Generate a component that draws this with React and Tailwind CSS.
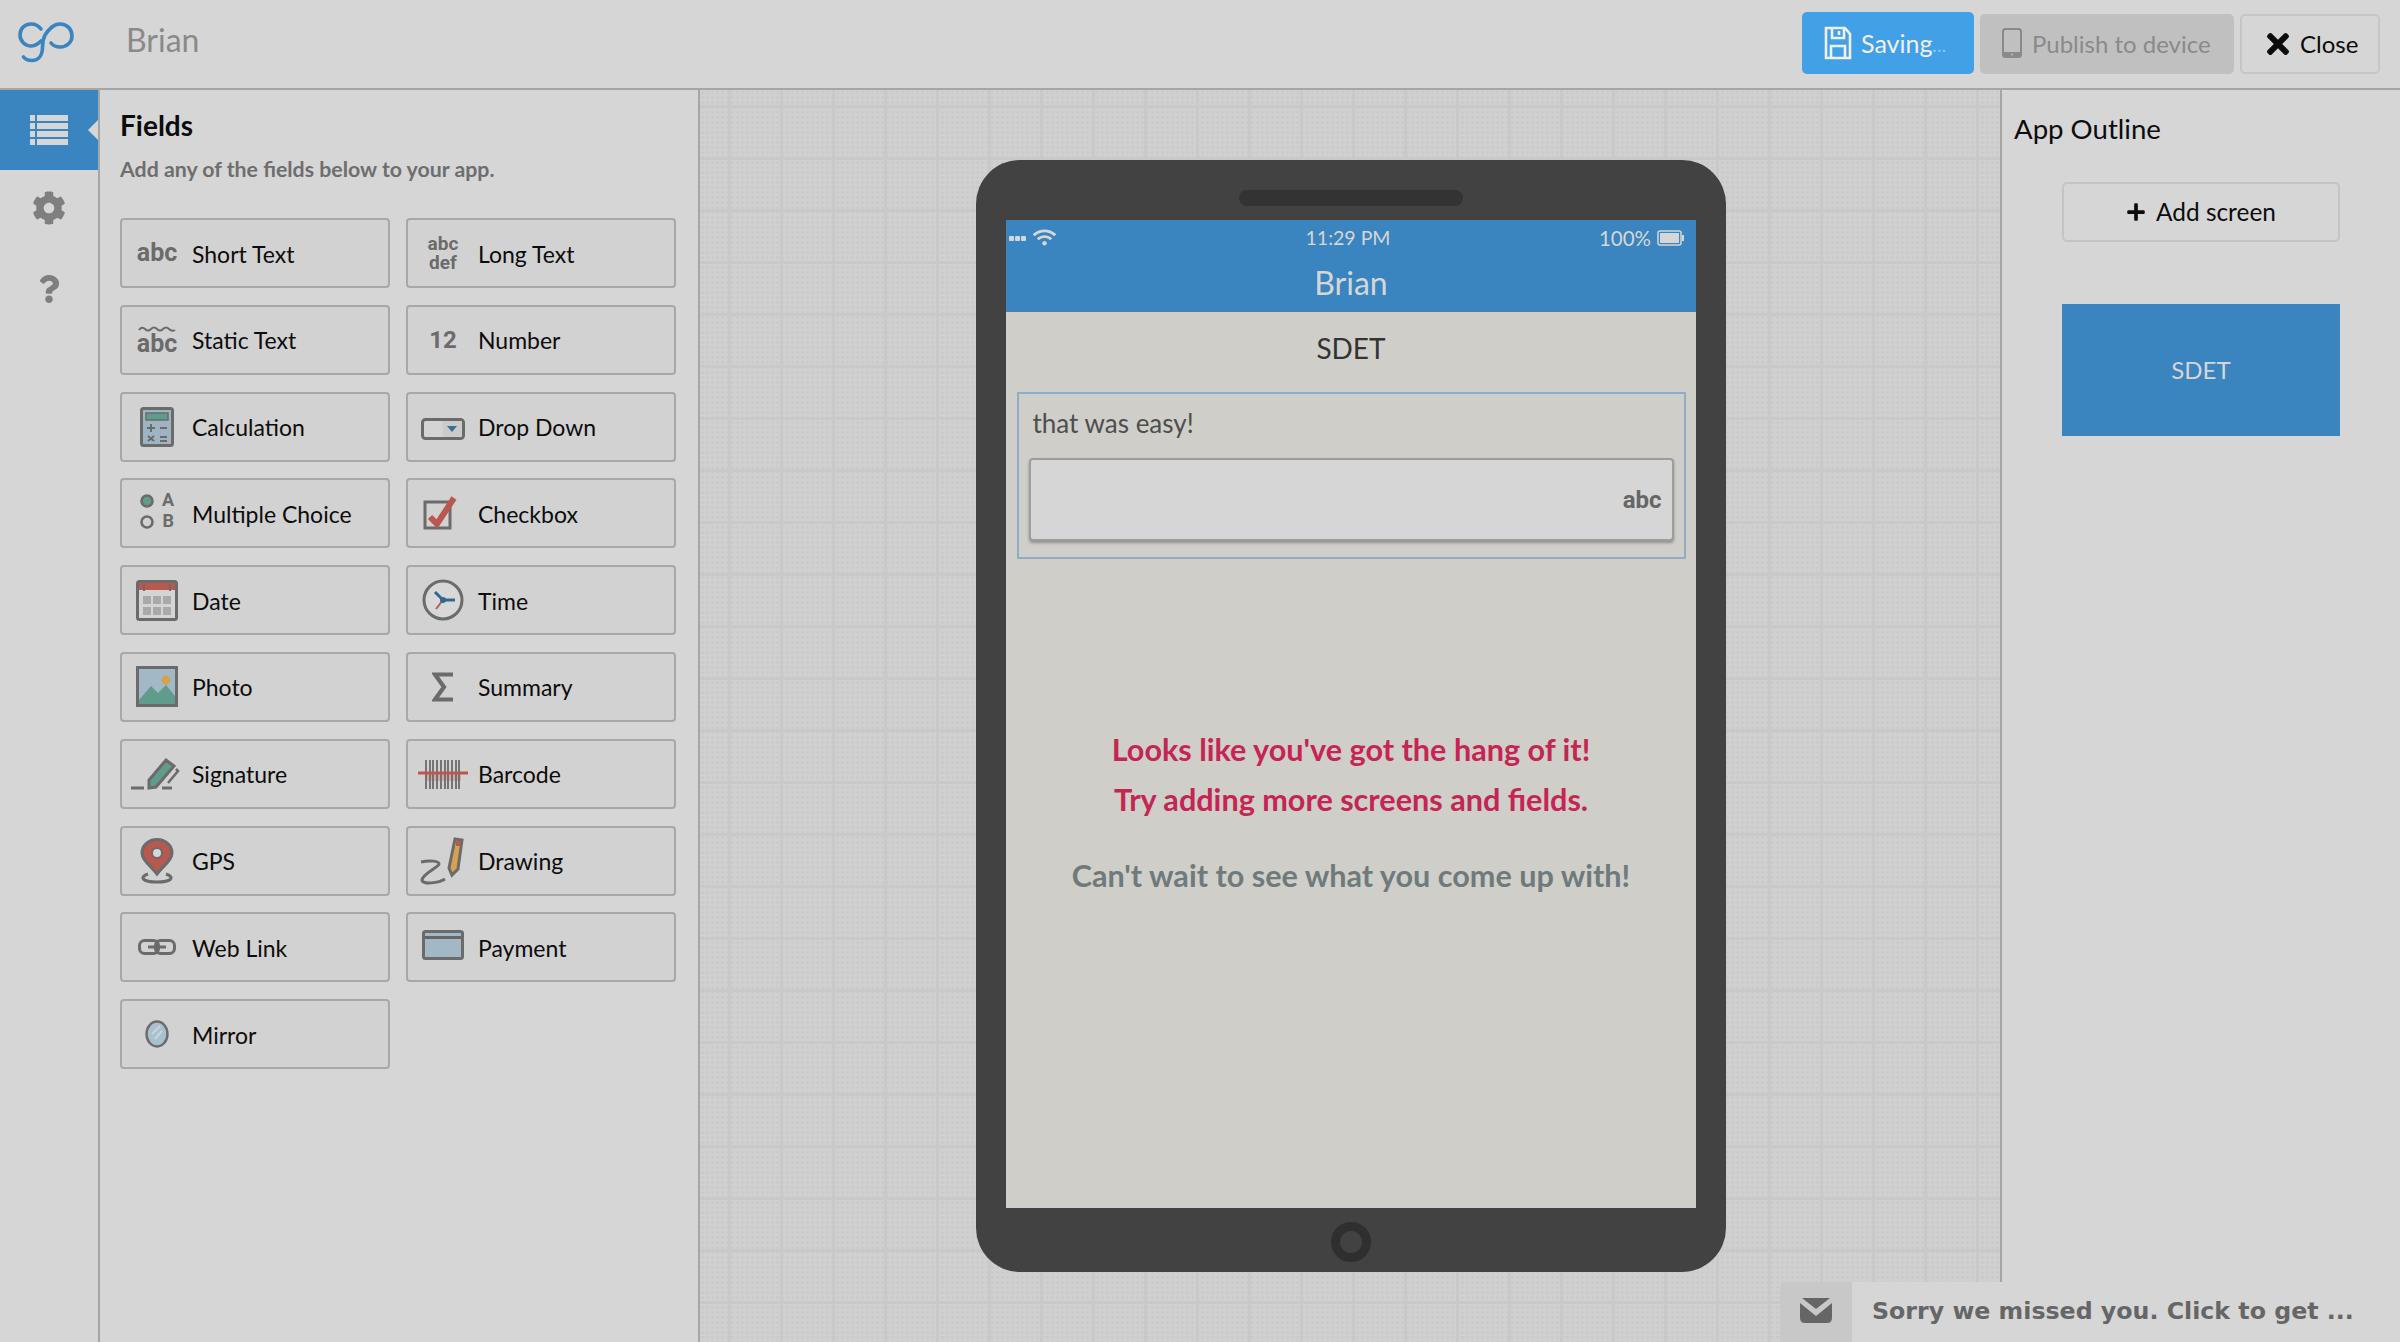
import React from "react";
import { FaCog, FaQuestion, FaTimes, FaPlus, FaWifi } from "react-icons/fa";

const G = "#6b6b6b";

function Logo() {
  return (
    <svg width="88" height="88" viewBox="0 0 88 88" fill="none" stroke="#3a84bf" strokeWidth="3.6" strokeLinecap="round">
      <path d="M41 30 C38 26 35 25 31 25 C24 25 20 30 20 36 C20 42 25 47 31 47 C35 47 38 45 41 42" />
      <path d="M52 28 C46 33 42.5 38 42.5 48 C42.5 57 38 61.5 32 61.5 C28 61.5 25 60 23.5 58" />
      <path d="M52 28 C55 25.5 57 25 60 25 C67 25 72 30 72 37 C72 43 67 48 60 48 C56 48 53 46.5 51 44" />
    </svg>
  );
}

function ListIcon() {
  return (
    <svg width="38" height="30" viewBox="0 0 38 30" fill="#d6d6d6">
      {[0, 8, 16, 24].map((y) => (
        <g key={y}>
          <rect x="0" y={y} width="5" height="6" />
          <rect x="7" y={y} width="31" height="6" />
        </g>
      ))}
    </svg>
  );
}

function AbcIcon() {
  return <span className="font-['Roboto',sans-serif] text-[25px] font-bold text-[#6b6b6b]">abc</span>;
}
function LongIcon() {
  return (
    <span className="flex flex-col items-center font-['Roboto',sans-serif] text-[19px] font-bold leading-[19px] text-[#6b6b6b]">
      <span>abc</span>
      <span>def</span>
    </span>
  );
}
function StaticIcon() {
  return (
    <span className="flex flex-col items-center text-[#6b6b6b]">
      <svg width="38" height="8" viewBox="0 0 38 8" fill="none" stroke={G} strokeWidth="2">
        <path d="M1 5 Q4 1 7 4 T13 4 T19 4 T25 4 T31 4 T37 5" />
      </svg>
      <span className="font-['Roboto',sans-serif] text-[25px] font-bold leading-[22px]">abc</span>
    </span>
  );
}
function NumIcon() {
  return <span className="font-['Roboto',sans-serif] text-[24px] font-bold text-[#6b6b6b]">12</span>;
}
function CalcIcon() {
  return (
    <svg width="34" height="40" viewBox="0 0 34 40">
      <rect x="1.5" y="1.5" width="31" height="37" rx="2" fill="#9fb4c2" stroke={G} strokeWidth="3" />
      <rect x="6" y="6" width="22" height="7" fill="#5f9c8c" stroke={G} strokeWidth="1.5" />
      <path d="M7 21h8M11 17v8M20 21h7M8 29l6 5M14 29l-6 5M20 30h7M20 34h7" stroke={G} strokeWidth="2" fill="none" />
    </svg>
  );
}
function DropIcon() {
  return (
    <svg width="44" height="22" viewBox="0 0 44 22" className="mt-[4px]">
      <rect x="1.5" y="1.5" width="41" height="19" rx="3" fill="#d4d4d4" stroke={G} strokeWidth="3" />
      <rect x="22" y="3" width="19" height="16" fill="#cbcbcb" />
      <path d="M26 8h10l-5 6z" fill="#3a6f96" />
    </svg>
  );
}
function ChoiceIcon() {
  return (
    <span className="relative block h-[38px] w-[34px] font-['Roboto',sans-serif] text-[#6b6b6b]">
      <svg width="14" height="38" viewBox="0 0 14 38" className="absolute left-0 top-0">
        <circle cx="7" cy="7" r="5.5" fill="#5f9c8c" stroke={G} strokeWidth="2.6" />
        <circle cx="7" cy="28" r="5.5" fill="none" stroke={G} strokeWidth="2.6" />
      </svg>
      <span className="absolute right-0 top-[-6px] text-[18px] font-bold leading-[24px]">A</span>
      <span className="absolute right-0 top-[15px] text-[18px] font-bold leading-[24px]">B</span>
    </span>
  );
}
function CheckIcon() {
  return (
    <svg width="36" height="34" viewBox="0 0 36 34" className="-translate-x-[2px]">
      <rect x="2" y="6" width="25" height="26" fill="none" stroke={G} strokeWidth="3" />
      <path d="M7 21l7 7L31 2" fill="none" stroke="#b9584f" strokeWidth="6" />
    </svg>
  );
}
function DateIcon() {
  return (
    <svg width="42" height="41" viewBox="0 0 42 41">
      <rect x="1.5" y="1.5" width="39" height="38" rx="2" fill="#d4d4d4" stroke={G} strokeWidth="3" />
      <rect x="3" y="3" width="36" height="7" fill="#b9584f" />
      <path d="M8 4v7M34 4v7" stroke={G} strokeWidth="2" />
      {[7, 17, 27].map((x) =>
        [16, 27].map((y) => <rect key={x + "-" + y} x={x} y={y} width="8" height="8" fill="#a9a9a9" />)
      )}
    </svg>
  );
}
function TimeIcon() {
  return (
    <svg width="42" height="42" viewBox="0 0 42 42">
      <circle cx="21" cy="21" r="19" fill="#d8d8d8" stroke={G} strokeWidth="3" />
      <path d="M21 21L13 13M21 21h12" stroke="#33688e" strokeWidth="3" />
      <path d="M21 21l-7 9" stroke="#b9584f" strokeWidth="2" />
      <circle cx="21" cy="21" r="3" fill="#33688e" />
    </svg>
  );
}
function PhotoIcon() {
  return (
    <svg width="42" height="41" viewBox="0 0 42 41">
      <rect x="1.5" y="1.5" width="39" height="38" fill="#a3b8c6" stroke={G} strokeWidth="3" />
      <circle cx="30" cy="14" r="4.5" fill="#d6a24d" />
      <path d="M3 34L15 20l7 7 8-8 9 11v8H3z" fill="#5f9c8c" />
    </svg>
  );
}
function SigmaIcon() {
  return (
    <svg width="22" height="30" viewBox="0 0 22 30" fill="none" stroke={G} strokeWidth="4.2">
      <path d="M21 2.5H3l9 12.5L3 27.5h18" />
    </svg>
  );
}
function SignIcon() {
  return (
    <svg width="50" height="34" viewBox="0 0 50 34" fill="none" className="-translate-x-[2px]">
      <path d="M1 31h13M32 31h10" stroke={G} strokeWidth="3" />
      <path d="M19 31v-8L36 3l8 6-18 21z" fill="#5f9c8c" stroke={G} strokeWidth="3" />
      <path d="M46 12l2 2-10 12" stroke={G} strokeWidth="2.5" />
    </svg>
  );
}
function BarIcon() {
  return (
    <svg width="50" height="30" viewBox="0 0 50 30" fill="none">
      <rect x="7" y="14" width="36" height="8" fill="#cfaaa6" />
      <path d="M8 1v29M12 1v29M15 1v29M19 1v29M23 1v29M27 1v29M30 1v29M34 1v29M38 1v29M41 1v29" stroke={G} strokeWidth="1.8" />
      <path d="M0 14h50" stroke="#b9584f" strokeWidth="3" />
    </svg>
  );
}
function GpsIcon() {
  return (
    <svg width="34" height="46" viewBox="0 0 34 46" fill="none">
      <path d="M8 36c-9 3-6 8 9 8s18-5 9-8" stroke={G} strokeWidth="3" />
      <path d="M17 36C11 28 2 22 2 15a15 13.5 0 0 1 30 0c0 7-9 13-15 21z" fill="#b9584f" stroke={G} strokeWidth="3" />
      <circle cx="17" cy="15" r="5" fill="#d6d6d6" stroke={G} strokeWidth="2" />
    </svg>
  );
}
function DrawIcon() {
  return (
    <svg width="46" height="50" viewBox="0 0 46 50" fill="none">
      <path d="M1 26c9-2 18-1 18 2 0 3-17 10-17 16 0 5 17 3 23-1" stroke={G} strokeWidth="3" />
      <path d="M35 3l7 1-4 29-6 6-3-7z" fill="#d6a24d" stroke={G} strokeWidth="3" />
      <rect x="36" y="5" width="4" height="5" fill="#b9584f" />
    </svg>
  );
}
function LinkIcon() {
  return (
    <svg width="38" height="16" viewBox="0 0 38 16" fill="none" stroke={G} strokeWidth="3">
      <rect x="1.5" y="1.5" width="19" height="13" rx="5" />
      <rect x="17.5" y="1.5" width="19" height="13" rx="5" />
      <path d="M10 8h18" />
    </svg>
  );
}
function PayIcon() {
  return (
    <svg width="42" height="30" viewBox="0 0 42 30" className="-translate-y-[2px]">
      <rect x="1.5" y="1.5" width="39" height="27" rx="2" fill="#a3b8c6" stroke={G} strokeWidth="3" />
      <rect x="3" y="6" width="36" height="3" fill="#666666" />
    </svg>
  );
}
function MirrorIcon() {
  return (
    <svg width="24" height="28" viewBox="0 0 24 28" fill="none">
      <ellipse cx="12" cy="14" rx="10.5" ry="12.5" fill="#a9c0ce" stroke={G} strokeWidth="2.4" />
      <path d="M7 14l8-8M10 19l7-8" stroke="#c6d6df" strokeWidth="2" />
    </svg>
  );
}

const fields = [
  ["Short Text", <AbcIcon />],
  ["Long Text", <LongIcon />],
  ["Static Text", <StaticIcon />],
  ["Number", <NumIcon />],
  ["Calculation", <CalcIcon />],
  ["Drop Down", <DropIcon />],
  ["Multiple Choice", <ChoiceIcon />],
  ["Checkbox", <CheckIcon />],
  ["Date", <DateIcon />],
  ["Time", <TimeIcon />],
  ["Photo", <PhotoIcon />],
  ["Summary", <SigmaIcon />],
  ["Signature", <SignIcon />],
  ["Barcode", <BarIcon />],
  ["GPS", <GpsIcon />],
  ["Drawing", <DrawIcon />],
  ["Web Link", <LinkIcon />],
  ["Payment", <PayIcon />],
  ["Mirror", <MirrorIcon />],
];

function FieldButton({ label, icon }) {
  return (
    <div className="flex h-[70px] items-center rounded-[4px] border-2 border-[#a8a8a8] bg-[#d2d2d2]">
      <span className="flex h-full w-[70px] shrink-0 items-center justify-center">{icon}</span>
      <span className="mt-[2px] text-[23px] leading-none text-[#0c0c0c]">{label}</span>
    </div>
  );
}

export default function App() {
  return (
    <div className="relative flex h-[1342px] w-[2400px] flex-col overflow-hidden bg-[#d6d6d6] font-['Lato','Liberation_Sans',sans-serif]">
      <header className="flex h-[90px] shrink-0 items-center border-b-2 border-[#a6a6a6] pb-[2px]">
        <Logo />
        <span className="mb-[6px] ml-[38px] text-[32px] leading-none text-[#8a8a8a]">Brian</span>
        <div className="ml-auto mr-[20px] flex items-center gap-[6px]">
          <div className="flex h-[62px] w-[172px] items-center rounded-[5px] bg-[#42a0e6] pl-[22px] text-[#f0f0f0]">
            <svg width="28" height="34" viewBox="0 0 28 34" fill="none" stroke="#f0f0f0" strokeWidth="2.6">
              <path d="M2 2h19l5 6v24H2z" />
              <path d="M8 2v10h12V2M15 5v4M7 32V20h14v12" />
            </svg>
            <span className="ml-[9px] text-[25px] leading-none">Saving</span>
            <span className="mb-[20px] self-end text-[16px] font-bold leading-none tracking-[1px] text-[#8fc4ec]">...</span>
          </div>
          <div className="mt-[2px] flex h-[60px] w-[254px] items-center rounded-[5px] bg-[#c0c0c0] pl-[22px] text-[#8a8a8a]">
            <svg width="20" height="30" viewBox="0 0 20 30" className="mb-[2px]">
              <rect x="1" y="1" width="18" height="28" rx="2.5" fill="none" stroke="#8a8a8a" strokeWidth="2" />
              <rect x="1" y="24" width="18" height="5" fill="#8a8a8a" />
              <circle cx="10" cy="26.5" r="1" fill="#c0c0c0" />
            </svg>
            <span className="ml-[10px] text-[24px] leading-none">Publish to device</span>
          </div>
          <div className="mt-[2px] flex h-[60px] w-[140px] items-center rounded-[5px] border-2 border-[#c6c6c6] pl-[20px] text-[#0c0c0c]">
            <FaTimes size={32} />
            <span className="ml-[6px] text-[24px] leading-none">Close</span>
          </div>
        </div>
      </header>

      <div className="flex min-h-0 flex-1">
        <nav className="flex w-[100px] shrink-0 flex-col items-center border-r-2 border-[#a6a6a6]">
          <div className="relative flex h-[80px] w-full items-center justify-center bg-[#3a84bf]">
            <ListIcon />
            <span className="absolute right-0 top-[30px] h-0 w-0 border-y-[10px] border-r-[10px] border-y-transparent border-r-[#d6d6d6]" />
          </div>
          <FaCog size={34} className="mt-[21px] text-[#7f7f7f]" />
          <FaQuestion size={28} className="mt-[50px] text-[#7f7f7f]" />
        </nav>

        <aside className="w-[600px] shrink-0 border-r-2 border-[#a6a6a6] pl-[20px] pr-[22px]">
          <h2 className="mt-[19px] text-[28px] font-bold leading-[32px] text-[#0c0c0c]">Fields</h2>
          <p className="mt-[15px] text-[21.3px] font-bold leading-[26px] text-[#6e6e6e]">Add any of the fields below to your app.</p>
          <div className="mt-[36px] grid grid-cols-2 gap-x-[16px] gap-y-[16.8px]">
            {fields.map(([label, icon]) => (
              <FieldButton key={label} label={label} icon={icon} />
            ))}
          </div>
        </aside>

        <main className="min-w-0 flex-1 bg-[#d0d0d0] bg-[linear-gradient(#c9c9c9_3px,transparent_3px),linear-gradient(90deg,#c9c9c9_3px,transparent_3px),radial-gradient(circle,#cacaca_1px,transparent_1.5px)] bg-[size:52px_52px,52px_52px,5px_5px] bg-[position:0px_15px,28px_0px,0px_0px] pl-[276px] pt-[70px]">
          <div className="flex h-[1112px] w-[750px] flex-col items-center rounded-[44px] bg-[#424242] pt-[30px]">
            <div className="h-[16px] w-[224px] rounded-[8px] bg-[#333333]" />
            <div className="mt-[14px] flex h-[988px] w-[690px] flex-col items-center bg-[#cfcec9]">
              <div className="flex h-[92px] w-full shrink-0 flex-col bg-[#3a84bf] text-[#d6d6d6]">
                <div className="grid h-[36px] grid-cols-3 items-center px-[3px]">
                  <div className="flex items-center gap-[7px]">
                    <span className="flex gap-[1px]">
                      <span className="h-[5px] w-[5px] rounded-[1px] bg-[#d6d6d6]" />
                      <span className="h-[5px] w-[5px] rounded-[1px] bg-[#d6d6d6]" />
                      <span className="h-[5px] w-[5px] rounded-[1px] bg-[#d6d6d6]" />
                    </span>
                    <FaWifi size={23} className="-translate-y-[1px]" />
                  </div>
                  <span className="-translate-x-[3px] text-center text-[19.5px] leading-none">11:29 PM</span>
                  <div className="flex items-center justify-end gap-[6px] pr-[9px]">
                    <span className="text-[20.5px] leading-none">100%</span>
                    <svg width="27" height="16" viewBox="0 0 27 16">
                      <rect x="1" y="1" width="23" height="14" rx="2" fill="none" stroke="#d6d6d6" strokeWidth="1.5" />
                      <rect x="3" y="3" width="19" height="10" fill="#d6d6d6" />
                      <rect x="25" y="5" width="2" height="6" fill="#d6d6d6" />
                    </svg>
                  </div>
                </div>
                <div className="mt-[7px] text-center text-[32px] leading-[40px]">Brian</div>
              </div>
              <div className="mt-[20px] text-[28px] leading-[32px] text-[#333333]">SDET</div>
              <div className="mt-[28px] flex h-[167px] w-[669px] shrink-0 flex-col border-2 border-[#8fadc4] px-[10px]">
                <div className="ml-[4px] mt-[14px] text-[26px] leading-[30px] text-[#4e4e4e]">that was easy!</div>
                <div className="mt-[20px] flex h-[83px] w-full items-center justify-end rounded-[4px] border-2 border-[#9d9d9d] bg-[#d6d6d6] pr-[10px] shadow-[0_2px_3px_rgba(0,0,0,0.3)]">
                  <span className="font-['Roboto',sans-serif] text-[24px] font-bold leading-none text-[#666666]">abc</span>
                </div>
              </div>
              <div className="mt-[176px] text-[30.6px] font-bold leading-[30px] text-[#c42654]">Looks like you've got the hang of it!</div>
              <div className="mt-[20px] text-[30.6px] font-bold leading-[30px] text-[#c42654]">Try adding more screens and fields.</div>
              <div className="mt-[46px] text-[30.6px] font-bold leading-[30px] text-[#6f7a7c]">Can't wait to see what you come up with!</div>
            </div>
            <div className="mt-[14px] h-[40px] w-[40px] rounded-full border-[9px] border-[#2f2f2f]" />
          </div>
        </main>

        <aside className="w-[400px] shrink-0 border-l-2 border-[#a6a6a6] pl-[12px]">
          <h2 className="mt-[21px] text-[27.6px] leading-[36px] text-[#0c0c0c]">App Outline</h2>
          <div className="ml-[48px] mt-[35px] flex h-[60px] w-[278px] items-center justify-center gap-[10px] rounded-[5px] border-2 border-[#c4c4c4] text-[#0c0c0c]">
            <FaPlus size={20} />
            <span className="text-[24.4px] leading-none">Add screen</span>
          </div>
          <div className="ml-[48px] mt-[62px] flex h-[132px] w-[278px] items-center justify-center bg-[#3a84bf] text-[24px] text-[#d6d6d6]">SDET</div>
        </aside>
      </div>

      <div className="absolute bottom-0 left-[1780px] flex h-[60px] w-[598px] overflow-hidden rounded-t-[5px] bg-[#d6d6d6]">
        <div className="flex w-[72px] shrink-0 items-center justify-center bg-[#c8c8c8]">
          <svg width="32" height="25" viewBox="0 0 32 25" className="translate-y-[-2px]">
            <path d="M2 0H30L16 11Z" fill="#666666" />
            <path d="M0 5 L16 18 L32 5 V20 Q32 25 27 25 H5 Q0 25 0 20 Z" fill="#666666" />
          </svg>
        </div>
        <div className="flex items-center whitespace-nowrap pl-[20px] font-['DejaVu_Sans',sans-serif] text-[23.7px] font-bold leading-none text-[#666666]">Sorry we missed you. Click to get ...</div>
      </div>
    </div>
  );
}
